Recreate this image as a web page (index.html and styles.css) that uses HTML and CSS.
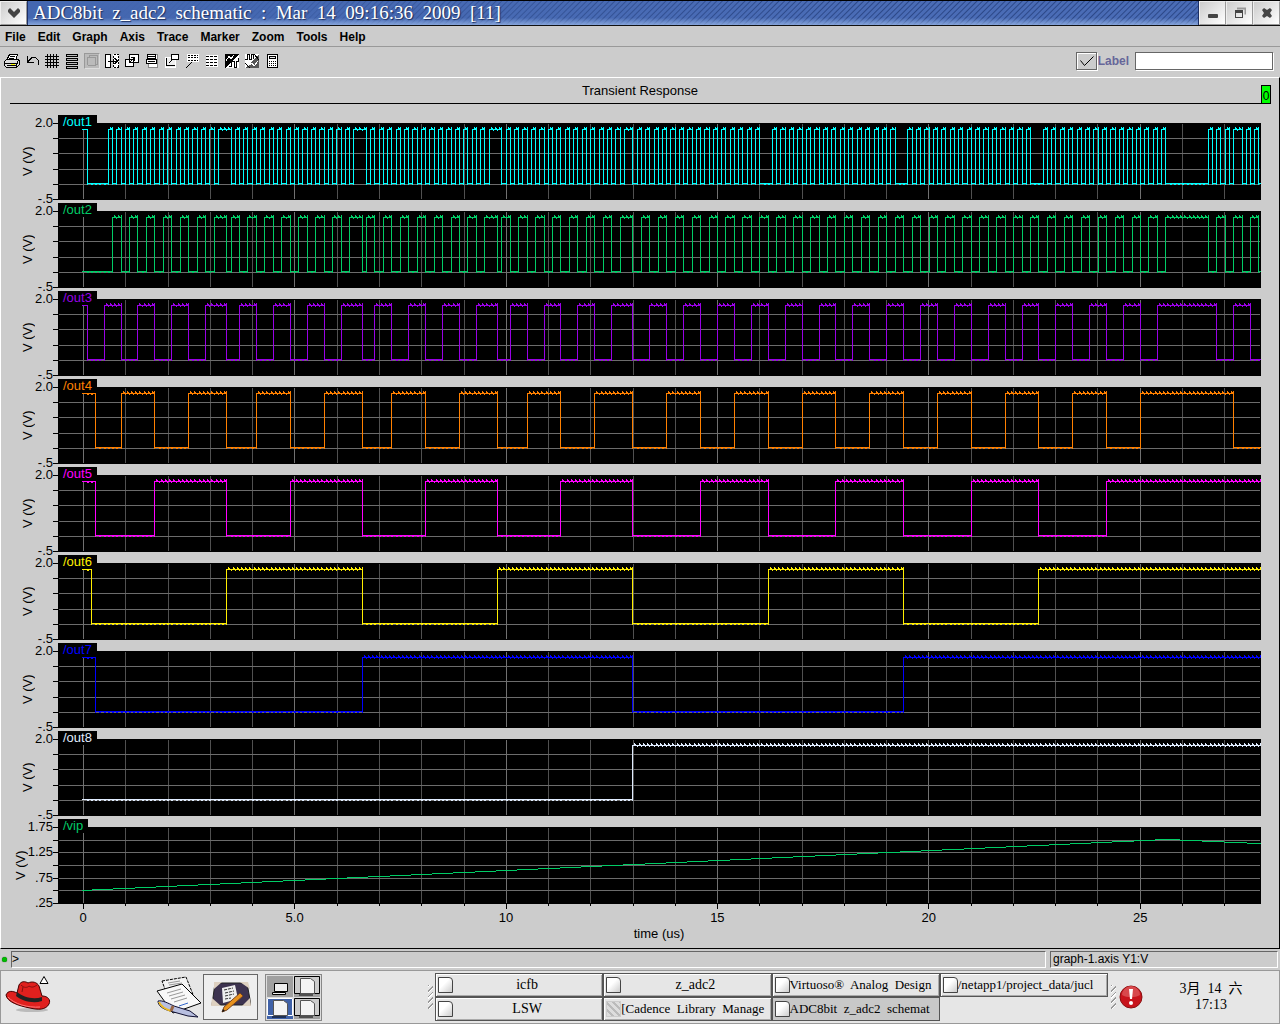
FILE: index.html
```html
<!DOCTYPE html>
<html lang="en">
<head>
    <meta charset="UTF-8">
    <meta name="viewport" content="width=device-width, initial-scale=1.0">
    <title>ADC8bit z_adc2 schematic</title>
    <link rel="stylesheet" href="styles.css">
</head>
<body>
    <header class="titlebar">
        <button class="wm-button" type="button" aria-label="Window menu">
            <svg width="14" height="10" viewBox="0 0 14 10"><path d="M1 2l2-2 4 4 4-4 2 2v2L7 10 1 4z" fill="#444"/></svg>
        </button>
        <h1 class="title">ADC8bit  z_adc2  schematic  :  Mar  14  09:16:36  2009  [11]</h1>
        <button class="wm-button" type="button" aria-label="Minimize">
            <svg width="12" height="12" viewBox="0 0 12 12"><rect x="1" y="7" width="10" height="4" rx="1" fill="#444"/></svg>
        </button>
        <button class="wm-button" type="button" aria-label="Maximize">
            <svg width="12" height="12" viewBox="0 0 12 12"><path d="M3 1.500h8.500v6" fill="none" stroke="#999" stroke-width="2"/><path d="M1 3h8v8H1z M2 6v4h6v-4z" fill="#444" fill-rule="evenodd"/></svg>
        </button>
        <button class="wm-button" type="button" aria-label="Close">
            <svg width="12" height="12" viewBox="0 0 12 12"><path d="M1 3l2-2 3 2 3-2 2 2-2 3 2 3-2 2-3-2-3 2-2-2 2-3z" fill="#444"/></svg>
        </button>
    </header>

    <nav class="menubar">
        <button type="button">File</button>
        <button type="button">Edit</button>
        <button type="button">Graph</button>
        <button type="button">Axis</button>
        <button type="button">Trace</button>
        <button type="button">Marker</button>
        <button type="button">Zoom</button>
        <button type="button">Tools</button>
        <button type="button">Help</button>
    </nav>

    <div class="toolbar">
        <button type="button" aria-label="Print">
            <svg viewBox="0 0 16 16"><path d="M5.500 1.500h8l-2 6h-9z" fill="#fff" stroke="#000"/><path d="M6 3.500h5M5 5.500h5" stroke="#000"/><path d="M.5 8.500l2-2h11l2 1v4l-3 3h-10l-2-2z" fill="#ddd" stroke="#000"/><path d="M1 10.500h12M3 12.500h9M13.500 8l-1 6" stroke="#000"/><path d="M7 11.500h4" stroke="#ff0"/></svg>
        </button>
        <button type="button" aria-label="Undo">
            <svg viewBox="0 0 16 16"><path d="M3.500 3v6.500H10M4 8.500l4-4h3.500l3 3V12" fill="none" stroke="#000"/></svg>
        </button>
        <button type="button" aria-label="Grid">
            <svg viewBox="0 0 16 16"><path d="M3.500 1v14M6.500 1v14M9.500 1v14M12.500 1v14M1 3.500h14M1 6.500h14M1 9.500h14M1 12.500h14" stroke="#000"/></svg>
        </button>
        <button type="button" aria-label="Strip">
            <svg viewBox="0 0 16 16"><path d="M2.500 1.500h11v2h-11zM2.500 5.500h11v2h-11zM2.500 9.500h11v2h-11zM2.500 13.500h11v2h-11z" fill="#bbb" stroke="#000"/></svg>
        </button>
        <button type="button" aria-label="Cards" disabled>
            <svg viewBox="0 0 16 16"><path d="M0 0h16v16H0z" fill="#bbb"/><path d="M.5 15V.5H15M3.500 12V4.500h8v8h-8M5 4V2.500h8.500V11H12" fill="none" stroke="#999"/><path d="M15.500 1v14.500H1" fill="none" stroke="#ddd"/></svg>
        </button>
        <button type="button" aria-label="Fit">
            <svg viewBox="0 0 16 16"><path d="M1 1h6v14H1zM9 1h6v14H9z" fill="#fff"/><path d="M1.500 1.500h5v13h-5zM4 8h9M10.500 5l3 3-3 3" fill="none" stroke="#000"/><path d="M9.500 1.500h5v13h-5z" fill="none" stroke="#000" stroke-dasharray="2 1"/></svg>
        </button>
        <button type="button" aria-label="Zoom window">
            <svg viewBox="0 0 16 16"><path d="M5.500 1.500h9v8h-9zM1.500 6.500h8v7h-8z" fill="#fff" stroke="#000"/><path d="M5 10l5-5M7 4.500h3.500V8" fill="none" stroke="#000"/></svg>
        </button>
        <button type="button" aria-label="Subwindow">
            <svg viewBox="0 0 16 16"><path d="M4.500 1.500h9v13h-9z" fill="#fff" stroke="#888"/><path d="M3.500 1.500h8v4h-8zM2.500 6.500h10v4h-10z" fill="#fff" stroke="#000"/><path d="M4 3.500h7M4 8.500h7" stroke="#000"/></svg>
        </button>
        <button type="button" aria-label="New window">
            <svg viewBox="0 0 16 16"><path d="M1.500 4.500h10v10h-10z" fill="#eee" stroke="#fff"/><path d="M7.500 1.500h7v5h-7z" fill="#fff" stroke="#000"/><path d="M2.500 5v7.500H11M5 10l4-4" fill="none" stroke="#000"/></svg>
        </button>
        <button type="button" aria-label="Label data">
            <svg viewBox="0 0 16 16"><path d="M3 1h12v8H3z" fill="#fff"/><path d="M4 2.500h10M4 4.500h10M4 7.500h10" stroke="#000" stroke-dasharray="2 1"/><path d="M8 9l-6 6" stroke="#000"/></svg>
        </button>
        <button type="button" aria-label="Table">
            <svg viewBox="0 0 16 16"><path d="M2 2h12v12H2z" fill="#fff"/><path d="M2 3.500h11M2 6.500h11M2 9.500h11M2 12.500h11" stroke="#000" stroke-dasharray="3 1"/></svg>
        </button>
        <button type="button" aria-label="Invert trace">
            <svg viewBox="0 0 16 16"><path d="M1 1h14L1 15z" fill="#000"/><path d="M15 1v14H1z" fill="#fff"/><path d="M2 8l3-5 2 3 3-4" fill="none" stroke="#fff"/><path d="M5 13.500h2v-5h3v6h2v-6h2v-4" fill="none" stroke="#000"/></svg>
        </button>
        <button type="button" aria-label="Digital trace">
            <svg viewBox="0 0 16 16"><path d="M1 1h14L1 15z" fill="#fff"/><path d="M15 1v14H1z" fill="#555"/><path d="M1 6.500h2v-5h2v5h2v-5h2v4" fill="none" stroke="#000"/><path d="M4 13l4-3 2 3 4-5" fill="none" stroke="#fff"/><path d="M10 1l5 6M1 10l5 5" stroke="#000"/></svg>
        </button>
        <button type="button" aria-label="Calculator">
            <svg viewBox="0 0 16 16"><rect x="3.500" y="1.500" width="10" height="13" rx="1" fill="#fff" stroke="#000"/><path d="M5.500 3.500h6v2h-6z" fill="#eee" stroke="#000"/><path d="M5 8.500h7M5 10.500h7M5 12.500h7" stroke="#000" stroke-dasharray="1 1"/></svg>
        </button>
        <div class="label-field">
            <span class="check">
                <input type="checkbox" id="labelOn" checked>
                <svg width="16" height="12" viewBox="0 0 16 12"><path d="M1.500 5.500l4 5 9-9" fill="none" stroke="#000"/></svg>
            </span>
            <label for="labelOn">Label</label>
            <input type="text" id="labelText" aria-label="Label text">
        </div>
    </div>

    <main class="graph">
        <div class="graph-head">
            <h2>Transient Response</h2>
            <span class="badge">0</span>
        </div>
        <div id="panels"></div>
        <ul class="x-labels">
            <li>0</li>
            <li>5.0</li>
            <li>10</li>
            <li>15</li>
            <li>20</li>
            <li>25</li>
        </ul>
        <div class="x-title">time (us)</div>
    </main>

    <div class="status">
        <span class="led"></span>
        <div class="status-prompt">&gt;</div>
        <div class="status-info">graph-1.axis Y1:V</div>
    </div>

    <footer class="taskbar">
        <button class="launcher" type="button" aria-label="Main menu">
            <svg width="48" height="44" viewBox="0 0 48 44">
                <ellipse cx="27" cy="35" rx="16" ry="2" fill="#bbb"/>
                <path d="M1 20c2-5 7-4 11-2l2-8c2-4 6-4 9-2 4-2 9-1 11 3l3 10c6 0 9 4 7 8-3 6-11 6-19 4C14 31 2 27 1 20z" fill="#e0201e" stroke="#400" stroke-width="1"/>
                <path d="M12 17c6 5 16 8 25 5v4c-9 3-20 0-26-5z" fill="#222"/>
                <path d="M16 10c3 3 6 3 8 1 3 2 5 1 8-1M18 12l-1 5" fill="none" stroke="#811"/>
                <path d="M3 22c6 7 20 11 32 10" fill="none" stroke="#f77"/>
                <path d="M35 8.500l4-7 4 7z" fill="#fff" stroke="#000"/>
            </svg>
        </button>
        <button class="launcher papers" type="button" aria-label="Writer">
            <svg width="46" height="42" viewBox="0 0 46 42">
                <path d="M6 5L30 1l8 20-24 6z" fill="#f2f2f2" stroke="#000" stroke-dasharray="3 1"/>
                <path d="M1 15l25-7 19 19-28 10z" fill="#f8f8f8" stroke="#000"/>
                <path d="M12 7l12-2M13 9l13-2M11 17l14-4M13 20l14-4M15 23l14-4M18 26l13-4" stroke="#999"/>
                <path d="M23 30l9-3" stroke="#36c"/>
                <path d="M2 25c4-1 10 2 16 5l16 5 8 6-10-1-18-5C7 33 2 30 2 25z" fill="#b8bfe0" stroke="#113"/>
                <path d="M3 26c2 5 6 7 12 9" fill="none" stroke="#eb2" stroke-width="2"/>
                <path d="M17 30l-2 5" stroke="#964" stroke-width="3"/>
            </svg>
        </button>
        <button class="launcher framed" type="button" aria-label="Office">
            <svg width="40" height="34" viewBox="0 0 40 34">
                <path d="M4 3h32l4 22H1z" fill="#3d3350" stroke="#222"/>
                <path d="M3 2h8l-8 7zM29 2h8l2 7zM1 18l9 8H0zM39 18l-8 8h9z" fill="#ddd0c0"/>
                <path d="M11 8l13-3 3 14-15 4z" fill="#eee"/>
                <path d="M13 10l9-2M14 13l9-2M14 16l9-2M14 19l6-1" stroke="#333" stroke-dasharray="3 1"/>
                <path d="M29 13l3 3-16 14-5 2 2-5z" fill="#e8921e" stroke="#742"/>
                <path d="M11 32l1-3 2 2z" fill="#111"/>
            </svg>
        </button>
        <div class="pager">
            <button type="button" aria-label="Workspace 1"><svg viewBox="0 0 26 20"><path d="M7.500 7.500h13v8h-13zM5.500 16.500h13v2h-13z" fill="#eee" stroke="#000"/></svg></button>
            <button type="button" aria-label="Workspace 2"><svg viewBox="0 0 26 20"><path d="M.5.500h25v17H.5zM5 19h14" fill="#ccc" stroke="#000"/><path d="M6.500 2.500h10l4 3v12h-14z" fill="#f4f4f4" stroke="#555"/></svg></button>
            <button type="button" aria-label="Workspace 3" class="current"><svg viewBox="0 0 26 20"><path d="M.5.500h25v17H.5z" fill="none" stroke="#fff"/><path d="M5 19h14" stroke="#000"/><path d="M6.500 2.500h10l4 3v12h-14z" fill="#f4f4f4" stroke="#555"/></svg></button>
            <button type="button" aria-label="Workspace 4"><svg viewBox="0 0 26 20"><path d="M.5.500h25v17H.5zM5 19h14" fill="#ccc" stroke="#000"/><path d="M6.500 2.500h10l4 3v12h-14z" fill="#f4f4f4" stroke="#555"/></svg></button>
        </div>
        <span class="handle tasks-handle"></span>
        <div class="tasks">
            <button type="button"><i class="doc"></i><span>icfb</span></button>
            <button type="button"><i class="doc"></i><span>LSW</span></button>
            <button type="button"><i class="doc"></i><span>z_adc2</span></button>
            <button type="button"><i class="doc faded"></i><span class="long">[Cadence  Library  Manage</span></button>
            <button type="button"><i class="doc"></i><span class="long">Virtuoso®  Analog  Design</span></button>
            <button type="button" class="active"><i class="doc"></i><span class="long">ADC8bit  z_adc2  schemat</span></button>
            <button type="button"><i class="doc"></i><span class="long">/netapp1/project_data/jucl</span></button>
        </div>
        <span class="handle"></span>
        <button class="launcher alert" type="button" aria-label="Updates">
            <svg width="24" height="24" viewBox="0 0 24 24"><circle cx="12" cy="12" r="11" fill="#c8141c" stroke="#811"/><path d="M3 10a9 9 0 0 1 18 0c-5 3-13 3-18 0z" fill="#d8484c"/><path d="M10 4h4l-1 10h-2z" fill="#fff"/><circle cx="12" cy="18" r="2" fill="#fff"/></svg>
        </button>
        <div class="clock">
            <span>3月  14  六</span>
            <span>17:13</span>
        </div>
    </footer>

    <script src="script.js"></script>
</body>
</html>
```

FILE: styles.css
```css
* {
    box-sizing: border-box;
}

body {
    margin: 0;
    min-height: 100vh;
    display: flex;
    flex-direction: column;
    background: #ccc;
    color: #000;
    font: 13px/16px "Liberation Sans", Arial, sans-serif;
}

button {
    margin: 0;
    padding: 0;
    border: 0;
    background: none;
    font: inherit;
    color: inherit;
}

svg {
    display: block;
}

h1, h2, ul {
    margin: 0;
    padding: 0;
    font-weight: normal;
}

/* window frame */
.titlebar {
    display: flex;
    height: 26px;
    border-top: 1px solid #000;
    border-bottom: 1px solid #111;
}

.title {
    flex: 1;
    padding-left: 5px;
    border: solid #1c2f66;
    border-width: 0 1px;
    overflow: hidden;
    white-space: pre;
    color: #fff;
    font: 19px/24px "Liberation Serif", "Times New Roman", serif;
    text-shadow: 1px 1px 1px #1a2c5a;
    background:
        linear-gradient(to bottom, rgba(70, 105, 180, 0) 70%, rgba(150, 180, 230, 0.8) 100%),
        linear-gradient(to right, #4467b0 5%, rgba(68, 103, 176, 0) 70%),
        repeating-linear-gradient(135deg, #4a6cb6 0, #4a6cb6 2px, #2c4888 3px, #4a6cb6 4px);
}

.wm-button {
    width: 27px;
    display: flex;
    align-items: center;
    justify-content: center;
    background: linear-gradient(135deg, #ccc, #fff);
    border: 1px solid #999;
    border-top-color: #eee;
    border-left-color: #eee;
}

.menubar {
    display: flex;
    gap: 12px;
    height: 21px;
    padding: 3px 5px 0;
    border-bottom: 1px solid #999;
    font-size: 12px;
    font-weight: bold;
}

.menubar button {
    height: 16px;
}

.toolbar {
    display: flex;
    align-items: center;
    gap: 4px;
    height: 30px;
    padding: 0 7px 2px 4px;
}

.toolbar button svg {
    width: 16px;
    height: 16px;
    shape-rendering: crispEdges;
}

.label-field {
    display: flex;
    align-items: center;
    margin-left: auto;
    color: #669;
    font-size: 12px;
    font-weight: bold;
}

.label-field label {
    margin: 0 6px 0 1px;
}

.check {
    position: relative;
}

.check svg {
    position: absolute;
    left: 3px;
    top: 3px;
    pointer-events: none;
}

.check input {
    display: block;
    appearance: none;
    width: 21px;
    height: 18px;
    margin: 0;
    border: 1px solid #666;
    box-shadow: inset 1px 1px #fff, 1px 1px #fff;
}

.label-field input[type="text"] {
    width: 138px;
    height: 18px;
    padding: 0 2px;
    border: 1px solid #666;
    box-shadow: 1px 1px #fff;
    background: #fff;
    font-size: 12px;
}

/* graph window */
.graph {
    flex: 1;
    border: 1px solid #000;
    border-top-color: #fff;
    border-left-color: #fff;
}

.graph-head {
    position: relative;
    height: 26px;
    margin: 0 9px 11px;
    padding-top: 5px;
    border-bottom: 1px solid #000;
    text-align: center;
}

.graph-head h2 {
    font-size: 13px;
    line-height: 16px;
}

.badge {
    position: absolute;
    right: -1px;
    bottom: -1px;
    width: 10px;
    height: 19px;
    border: 1px solid #000;
    background: #0f0;
    font-size: 12px;
    line-height: 20px;
}

.panel {
    display: flex;
    height: 88px;
    padding-right: 18px;
}

.y-axis {
    width: 52px;
    display: flex;
    flex-shrink: 0;
    align-items: stretch;
    justify-content: flex-end;
    margin: 2px 0 -2px;
}

.y-title {
    writing-mode: vertical-rl;
    transform: rotate(180deg);
    text-align: center;
    line-height: 14px;
}

.y-values {
    display: flex;
    flex-direction: column;
    justify-content: space-between;
    line-height: 12px;
    text-align: right;
}

.plot {
    position: relative;
    flex: 1;
    padding-top: 8px;
}

.plot svg {
    width: 100%;
    shape-rendering: crispEdges;
}

.tab {
    position: absolute;
    left: 5px;
    top: 0;
    height: 14px;
    padding: 0 5px;
    background: #000;
    line-height: 13px;
}

.x-labels {
    display: flex;
    margin: 4px 18px 0 52px;
    list-style: none;
}

.x-labels li {
    flex: 0 0 17.5%;
    text-align: center;
    line-height: 14px;
}

.x-labels li:first-child {
    margin-left: -6.25%;
}

.x-title {
    margin: 1px 18px 5px 56px;
    text-align: center;
}

.status {
    display: flex;
    align-items: center;
    gap: 4px;
    height: 21px;
    padding: 0 2px;
    font-size: 12px;
}

.led {
    width: 5px;
    height: 5px;
    border-radius: 50%;
    background: #0b0;
    box-shadow: 0 0 1px #030;
}

.status-prompt, .status-info {
    height: 17px;
    padding-left: 2px;
    border: 1px solid #666;
    border-right-color: #fff;
    border-bottom-color: #fff;
    line-height: 15px;
}

.status-prompt {
    flex: 1;
    padding-left: 0;
}

.status-info {
    width: 228px;
}

/* desktop panel */
.taskbar {
    display: flex;
    align-items: center;
    height: 54px;
    padding: 0 8px 0 4px;
    border: 1px solid #999;
    background: #e6e6e6;
    font: 14px/16px "Liberation Serif", "Noto Sans CJK SC", serif;
}

.papers {
    margin-left: 103px;
}

.framed {
    display: flex;
    align-items: center;
    justify-content: center;
    width: 55px;
    height: 46px;
    margin-left: 1px;
    border: 1px solid #666;
    background: #eee;
}

.pager {
    display: grid;
    grid-template-columns: 26px 26px;
    gap: 1px;
    margin-left: 7px;
    padding: 1px;
    border: 1px solid #888;
    background: #ddd;
}

.pager button {
    height: 21px;
    background: #a0a0a0;
}

.pager .current {
    background: #4062a8;
}

.handle {
    width: 5px;
    height: 24px;
    background: repeating-linear-gradient(135deg, #999 0, #999 1px, #fff 1px, #fff 2px, #e6e6e6 2px, #e6e6e6 4px);
}

.tasks-handle {
    margin: 0 2px 0 auto;
}

.tasks {
    flex: 0 1 673px;
    display: grid;
    grid-template-rows: 24px 24px;
    grid-auto-flow: column;
    grid-auto-columns: 1fr;
    margin-right: 3px;
}

.tasks button {
    display: flex;
    align-items: center;
    min-width: 0;
    padding: 0 1px 0 2px;
    border: 1px solid #555;
    box-shadow: inset 1px 1px #fff, inset -1px -1px #aaa;
}

.tasks .active {
    background: #c8c8c8;
    box-shadow: none;
}

.tasks span {
    flex: 1;
    white-space: pre;
}

.tasks .long {
    min-width: 0;
    font-size: 13px;
    text-align: left;
}

.doc {
    flex: none;
    width: 15px;
    height: 16px;
    border: 1px solid #444;
    border-top-right-radius: 4px;
    background: linear-gradient(135deg, #fff 40%, #ccc);
}

.faded {
    border-color: #ccc;
    border-radius: 0;
    background: repeating-linear-gradient(45deg, #ddd 0, #ddd 3px, #bbb 3px, #bbb 5px);
}

.alert {
    margin-left: 3px;
}

.clock {
    display: flex;
    flex-direction: column;
    width: 128px;
    padding-left: 8px;
    text-align: center;
    white-space: pre;
}
```

FILE: script.js
```js
const NS = 'http://www.w3.org/2000/svg';
const X0 = 30;          // plot x of t = 0
const STEP = 4.23;      // one sample, 0.1 us
const MICROSECOND = 42.26;
const RIGHT = 1208;

// every sample from a to b, with the given stride
function run(a, b, stride = 1) {
    const out = [];
    for (let n = a; n <= b; n += stride) out.push(n);
    return out;
}

// sample numbers at which each bit toggles
const traces = [
    { name: '/out1', color: '#00ffff', start: 1, edges: [1, ...run(6, 32), ...run(35, 64), ...run(67, 96), ...run(99, 128), 130, ...run(131, 160), ...run(163, 192), ...run(195, 224), ...run(227, 256), ...run(266, 272), ...run(274, 278)] },
    { name: '/out2', color: '#00cc66', start: 0, edges: [...run(7, 31, 2), 34, ...run(35, 63, 2), 66, ...run(67, 95, 2), 98, ...run(99, 127, 2), ...run(130, 256, 2), ...run(266, 278, 2)] },
    { name: '/out3', color: '#9900e6', start: 1, edges: [1, ...run(5, 29, 4), 34, ...run(37, 61, 4), 66, ...run(69, 93, 4), 98, ...run(101, 125, 4), ...run(130, 254, 4), 268, 272, 276] },
    { name: '/out4', color: '#ff8000', start: 1, edges: [3, 9, 17, 25, 34, 41, 49, 57, 66, 73, 81, 89, 98, 105, 113, 121, ...run(130, 250, 8), 272] },
    { name: '/out5', color: '#ff00ff', start: 1, edges: [3, 17, 34, 49, 66, 81, 98, 113, ...run(130, 242, 16)] },
    { name: '/out6', color: '#ffee00', start: 1, edges: [2, 34, 66, 98, 130, 162, 194, 226] },
    { name: '/out7', color: '#0000ff', start: 1, edges: [3, 66, 130, 194] },
    { name: '/out8', color: '#e0ecff', start: 0, edges: [130] }
];

function sampleX(n) {
    return Math.min(RIGHT, Math.floor(X0 + n * STEP));
}

function gridX(k) {
    return Math.round(X0 + 0.2 + k * MICROSECOND);
}

function box(x, y, w, h) {
    return `M${x} ${y}h${w}v${h}h${-w}z`;
}

function addPath(svg, d, fill) {
    const path = document.createElementNS(NS, 'path');
    path.setAttribute('d', d);
    path.setAttribute('fill', fill);
    svg.appendChild(path);
}

function drawFrame(svg, rows) {
    let ticks = '', minor = '', major = '', lines = '';
    rows.forEach((y, i) => {
        ticks += box(0, y, 5, 1);
        if (i > 0 && i < rows.length - 1) lines += box(6, y, RIGHT - 7, 1);
    });
    for (let k = 0; k < 28; k++) {
        const line = box(gridX(k), 1, 1, 75);
        if (k % 5) minor += line;
        else major += line;
    }
    addPath(svg, box(5, 0, RIGHT - 5, 77), '#000');
    addPath(svg, ticks, '#000');
    addPath(svg, minor, '#505050');
    addPath(svg, lines, '#6c6c6c');
    addPath(svg, major, '#707070');
}

function bitPath(trace) {
    const edges = [...trace.edges, 279];
    let d = '', from = 0, high = trace.start;
    edges.forEach(edge => {
        const x1 = from ? sampleX(from) : X0 - 1;
        const x2 = sampleX(edge);
        d += box(x1, high ? 6 : 60, x2 - x1, 1);
        for (let n = from; n < edge; n++) {
            const x = sampleX(n);
            if (high && from) {
                d += box(x + 2, 4, 1, 2) + box(x + 3, 5, 1, 1);
                if (n > from) d += box(x, 7, 1, 1);
            } else if (n > from) {
                d += box(x, high ? 7 : 61, 2, 1);
            }
        }
        if (edge < 279) d += box(x2, high && from ? 4 : 6, 1, high && from ? 58 : 56);
        from = edge;
        high = !high;
    });
    return d;
}

function vipPath() {
    let d = '';
    for (let x = X0 - 1; x < RIGHT; x++) {
        const n = (x - X0) / STEP;
        const y = n < 256 ? 63.4 - n * 0.199 : 12.4 + (n - 256) * 0.19;
        d += box(x, Math.floor(y), 1, 1);
    }
    return d;
}

function addPanel(name, color, values, rows, height) {
    const panel = document.createElement('div');
    panel.className = 'panel';
    panel.innerHTML = `
        <div class="y-axis">
            <div class="y-title">V (V)</div>
            <div class="y-values">${values.map(v => `<span>${v}</span>`).join('')}</div>
        </div>
        <div class="plot">
            <svg height="${height}" viewBox="0 0 ${RIGHT} ${height}" preserveAspectRatio="none"></svg>
            <span class="tab">${name}</span>
        </div>`;
    panel.querySelector('.tab').style.color = color;
    document.getElementById('panels').appendChild(panel);
    const svg = panel.querySelector('svg');
    drawFrame(svg, rows);
    return svg;
}

traces.forEach(trace => {
    const svg = addPanel(trace.name, trace.color, ['2.0', '-.5'], [0, 15, 30, 46, 61, 76], 77);
    addPath(svg, bitPath(trace), trace.color);
});

const vip = addPanel('/vip', '#00cc66', ['1.75', '1.25', '.75', '.25'], [0, 13, 25, 38, 51, 63, 76], 82);
addPath(vip, vipPath(), '#00cc66');
let ticks = '';
for (let k = 0; k < 28; k++) {
    ticks += box(gridX(k), 77, 1, k % 5 ? 2 : 5);
}
addPath(vip, ticks, '#000');
```
